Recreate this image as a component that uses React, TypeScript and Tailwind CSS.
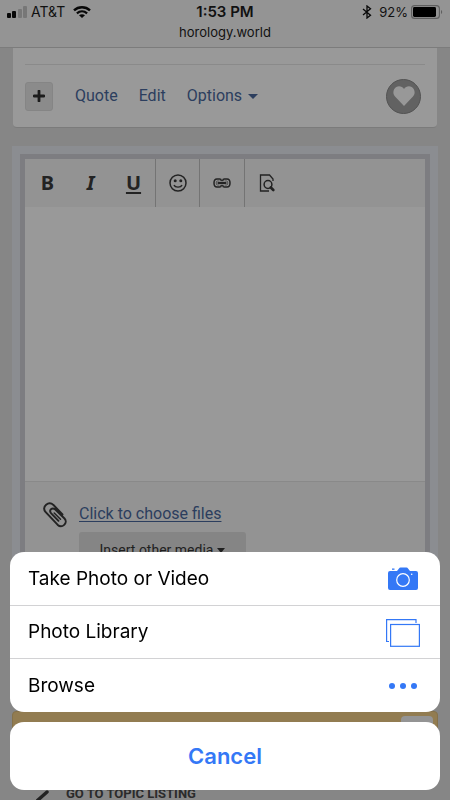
import React from 'react';

const StatusBar: React.FC = () => (
  <header className="h-12 shrink-0 border-b border-[#7c7c7c] bg-[#949494] px-[7px] pt-1 font-['Inter',sans-serif] text-[#111]">
    <div className="grid h-4 grid-cols-[1fr_auto_1fr] items-center text-[13px] leading-4">
      <div className="flex items-center gap-1 text-sm leading-4">
        <svg width="20" height="12" viewBox="0 0 20 12" aria-hidden="true">
          <rect x="0" y="7" width="4" height="5" rx="1" fill="#080808" />
          <rect x="5" y="5" width="4" height="7" rx="1" fill="#080808" />
          <rect x="11" y="3" width="4" height="9" rx="1" fill="#777" />
          <rect x="16" y="0" width="4" height="12" rx="1" fill="#777" />
        </svg>
        <span>AT&amp;T</span>
        <svg className="ml-1" width="18" height="12" viewBox="0 0 18 12" fill="none" aria-hidden="true">
          <path d="M1 4.4C5.6.2 12.4.2 17 4.4" stroke="#080808" strokeWidth="2.4" />
          <path d="M3.9 7.4C6.9 4.7 11.1 4.7 14.1 7.4" stroke="#080808" strokeWidth="2.2" />
          <path d="M6 9.3C7.8 7.8 10.2 7.8 12 9.3L9 12Z" fill="#080808" />
        </svg>
      </div>
      <time className="text-[15px] leading-4 font-semibold">1:53 PM</time>
      <div className="flex items-center justify-end gap-[3px]">
        <svg className="mr-1" width="10" height="14" viewBox="0 0 10 14" fill="none" aria-hidden="true">
          <path d="M1 4L8.5 10.2L5 13V1L8.5 3.8L1 10" stroke="#080808" strokeWidth="1.3" />
        </svg>
        <span>92%</span>
        <svg width="32" height="14" viewBox="0 0 32 14" fill="none" aria-hidden="true">
          <rect x=".6" y=".6" width="27.8" height="12.8" rx="3" stroke="#5f5f5f" strokeWidth="1.1" />
          <rect x="2" y="2" width="23" height="10" rx="1.4" fill="#000" />
          <path d="M30 5C31.6 5.5 31.6 8.5 30 9Z" fill="#5f5f5f" />
        </svg>
      </div>
    </div>
    <p className="mt-1 text-center text-[13px] leading-4">horology.world</p>
  </header>
);

const PostFooter: React.FC = () => (
  <section className="mx-[13px] rounded-b border-b border-[#7b7b7b] bg-[#999] px-3 pt-4">
    <div className="flex h-[63px] items-center border-t border-[#8a8a8a] text-base text-[#2c3e5e]">
      <button
        type="button"
        aria-label="Multiquote"
        className="flex h-[29px] w-7 items-center justify-center rounded-[3px] border border-[#858585] bg-[#8b8b8b]"
      >
        <svg width="12" height="12" viewBox="0 0 12 12" aria-hidden="true">
          <path d="M6 1V11M1 6H11" stroke="#1c1c1c" strokeWidth="2.8" strokeLinecap="round" />
        </svg>
      </button>
      <a href="#quote" className="ml-[22px]">Quote</a>
      <a href="#edit" className="ml-[21px]">Edit</a>
      <button type="button" className="ml-[21px] flex items-center gap-1.5">
        Options
        <svg width="10" height="5" viewBox="0 0 10 5" aria-hidden="true">
          <path d="M0 0H10L5 5Z" fill="#2c3e5e" />
        </svg>
      </button>
      <button
        type="button"
        aria-label="Like this"
        className="mr-1 ml-auto flex size-[35px] items-center justify-center rounded-full border border-[#535353] bg-[#626262]"
      >
        <svg width="22" height="20" viewBox="0 0 24 20" preserveAspectRatio="none" aria-hidden="true">
          <path d="M12 20L2.2 10.6C-.8 7.5.2 2.6 3.6 1C6.6-.4 10.3.5 12 3.1C13.7.5 17.4-.4 20.4 1C23.8 2.6 24.8 7.5 21.8 10.6Z" fill="#989898" />
        </svg>
      </button>
    </div>
  </section>
);

const Toolbar: React.FC = () => (
  <div className="flex h-12 bg-[#939393] font-['Noto_Sans',sans-serif] text-xl font-bold text-[#232323]">
    <div className="flex border-r border-[#747474] pl-px">
      <button type="button" aria-label="Bold" className="w-[43px]">B</button>
      <button type="button" aria-label="Italic" className="w-[43px] italic">I</button>
      <button type="button" aria-label="Underline" className="w-[43px] underline underline-offset-2">U</button>
    </div>
    <button type="button" aria-label="Emoji" className="flex w-11 items-center justify-center border-r border-[#747474]">
      <svg width="18" height="18" viewBox="0 0 18 18" fill="none" stroke="#232323" aria-hidden="true">
        <circle cx="9" cy="9" r="8" strokeWidth="1.5" />
        <path d="M5 11C6.2 13.8 11.8 13.8 13 11" strokeWidth="1.4" />
        <circle cx="6.2" cy="6.7" r="1.5" fill="#232323" stroke="none" />
        <circle cx="11.8" cy="6.7" r="1.5" fill="#232323" stroke="none" />
      </svg>
    </button>
    <button type="button" aria-label="Link" className="flex w-[45px] items-center justify-center border-r border-[#747474]">
      <svg width="18" height="10" viewBox="0 0 18 10" fill="none" stroke="#232323" aria-hidden="true">
        <path d="M8.2 3.2V2.6Q8.2 1 6.6 1H4Q1 1 1 5T4 9H6.6Q8.2 9 8.2 7.4V6.8" strokeWidth="1.5" />
        <path d="M9.8 3.2V2.6Q9.8 1 11.4 1H14Q17 1 17 5T14 9H11.4Q9.8 9 9.8 7.4V6.8" strokeWidth="1.5" />
        <path d="M6.5 3H4.5Q3.2 3 3.2 5T4.5 7H6.5M11.5 3H13.5Q14.8 3 14.8 5T13.5 7H11.5" strokeWidth=".6" />
        <path d="M5.5 5H12.5" strokeWidth="2.2" strokeLinecap="round" />
      </svg>
    </button>
    <button type="button" aria-label="Preview" className="flex w-[43px] items-center justify-center">
      <svg width="16" height="18" viewBox="0 0 16 18" fill="none" stroke="#232323" aria-hidden="true">
        <path d="M14 7V5L10.5 1H1.5V17H10" strokeWidth="1.3" />
        <circle cx="9" cy="10.5" r="3.9" strokeWidth="1.5" />
        <path d="M11.8 13.5L14.3 16" strokeWidth="2.6" strokeLinecap="round" />
      </svg>
    </button>
  </div>
);

const ReplyEditor: React.FC = () => (
  <section className="mx-3 mt-[18px] bg-[#8b8d91] px-2 pt-2">
    <div className="border-x-[5px] border-t-[5px] border-[#7d7d81] bg-[#999]">
      <Toolbar />
      <textarea aria-label="Reply" className="block h-[274px] w-full resize-none bg-[#999] outline-none" />
      <div className="flex h-[220px] gap-3 border-t border-[#898989] bg-[#939393] pt-5 pl-[18px]">
        <svg width="24" height="26" viewBox="0 0 24 26" fill="none" stroke="#232323" aria-hidden="true">
          <path
            d="M19.5 12.5L10.5 3C5.5-1.5-1.5 4.5 2.5 10L14.5 22.7C19 27 25.5 21 21.5 16.5L12.3 7.5C9 4.7 5.5 8.3 8.2 11.3L15.5 18.8"
            strokeWidth="1.9"
            strokeLinecap="round"
          />
          <path d="M11.2 11L17.5 17.2" strokeWidth="1.5" strokeLinecap="round" />
        </svg>
        <div>
          <a href="#attach" className="block text-base leading-6 text-[#2c3e5e] underline underline-offset-2">
            Click to choose files
          </a>
          <button
            type="button"
            className="mt-[6px] flex h-9 w-[167px] items-center justify-center gap-1 rounded-[3px] bg-[#858585] text-sm text-[#1f1f1f]"
          >
            Insert other media
            <svg width="8" height="5" viewBox="0 0 8 5" aria-hidden="true">
              <path d="M0 0H8L4 5Z" fill="#1f1f1f" />
            </svg>
          </button>
        </div>
      </div>
    </div>
  </section>
);

const PageFooter: React.FC = () => (
  <footer>
    <div className="mx-3 mt-[10px] flex h-11 justify-end rounded border border-[#85714a] bg-[#927c51] p-1">
      <button type="button" aria-label="Dismiss" className="h-8 w-8 rounded bg-[#949494]" />
    </div>
    <a href="#topics" className="mt-[33px] ml-9 flex items-start gap-[14px] text-[13px] leading-3 font-bold text-[#2b2b2b]">
      <svg width="16" height="24" viewBox="0 0 16 24" fill="none" aria-hidden="true">
        <path d="M11 4L2 12L11 20" stroke="#222" strokeWidth="3.4" strokeLinecap="round" />
      </svg>
      GO TO TOPIC LISTING
    </a>
  </footer>
);

const CameraIcon: React.FC = () => (
  <svg className="mr-0.5" width="30" height="24" viewBox="0 0 30 24" aria-hidden="true">
    <path d="M2 4H9L11 1.5Q11.5.5 12.5.5H18.5Q19.5.5 20 1.5L22 4H28Q30 4 30 6V21Q30 23 28 23H2Q0 23 0 21V6Q0 4 2 4Z" fill="#3478f6" />
    <rect x="4" y="1.5" width="2.5" height="1.3" fill="#3478f6" />
    <circle cx="15" cy="13" r="6.3" fill="none" stroke="#fff" strokeWidth="1.2" />
    <circle cx="23.7" cy="7.2" r=".8" fill="#fff" />
  </svg>
);

const LibraryIcon: React.FC = () => (
  <svg width="34" height="28" viewBox="0 0 34 28" fill="none" stroke="#3478f6" strokeWidth="1.2" aria-hidden="true">
    <path d="M30 4V.6H.6V22.5H3" />
    <rect x="4.6" y="5.5" width="28.8" height="21.8" />
  </svg>
);

const MoreIcon: React.FC = () => (
  <svg className="mr-[3px]" width="28" height="6" viewBox="0 0 28 6" fill="#3478f6" aria-hidden="true">
    <circle cx="3" cy="3" r="3" />
    <circle cx="14" cy="3" r="3" />
    <circle cx="25" cy="3" r="3" />
  </svg>
);

const actions = [
  { label: 'Take Photo or Video', icon: <CameraIcon /> },
  { label: 'Photo Library', icon: <LibraryIcon /> },
  { label: 'Browse', icon: <MoreIcon /> },
];

const ActionSheet: React.FC = () => (
  <div
    role="dialog"
    aria-label="Choose a file"
    className="fixed inset-x-0 bottom-0 flex flex-col gap-[10px] p-[10px] font-['Inter',sans-serif]"
  >
    <div className="divide-y divide-[#d2d2d4] overflow-hidden rounded-[14px] bg-white">
      {actions.map(({ label, icon }) => (
        <button
          key={label}
          type="button"
          className="flex h-[53px] w-full items-center justify-between pt-px pr-5 pl-[18px] text-[19px] text-black first:h-[54px]"
        >
          {label}
          {icon}
        </button>
      ))}
    </div>
    <button type="button" className="h-[68px] rounded-[14px] bg-white text-[22px] font-semibold text-[#3478f6]">
      Cancel
    </button>
  </div>
);

const App: React.FC = () => {
  return (
    <div className="flex h-screen flex-col overflow-hidden bg-[#868686] font-['Roboto',sans-serif]">
      <StatusBar />
      <main className="min-h-0 flex-1 overflow-hidden">
        <PostFooter />
        <ReplyEditor />
        <PageFooter />
      </main>
      <ActionSheet />
    </div>
  );
};

export default App;
